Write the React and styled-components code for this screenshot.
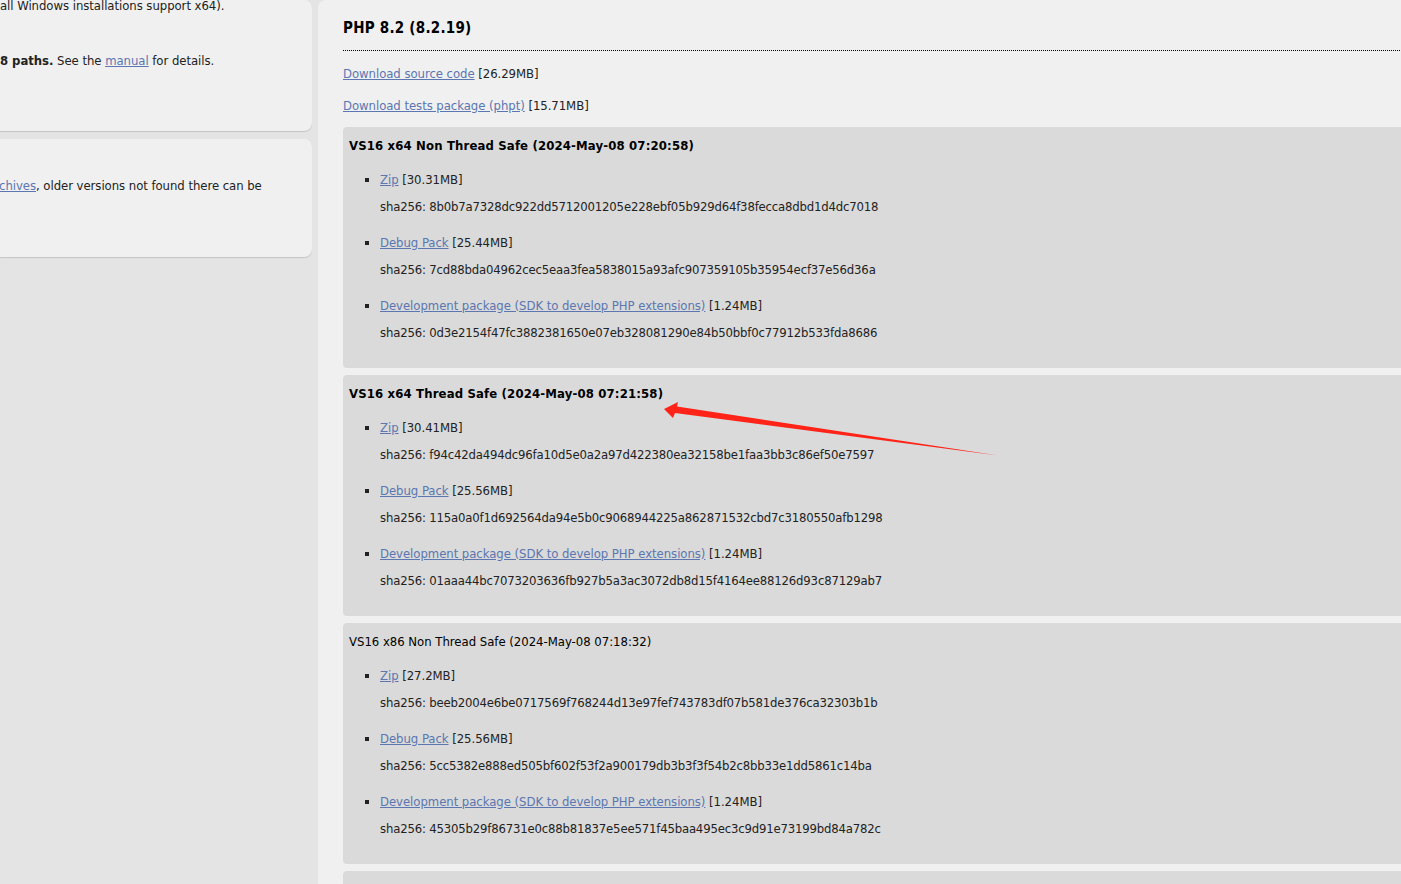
import React from 'react';
import styled, { createGlobalStyle } from 'styled-components';

const Global = createGlobalStyle`
  html, body {
    margin: 0;
    padding: 0;
    overflow: hidden;
    background: #e4e4e4;
  }
  body {
    font-family: "DejaVu Sans Condensed", "DejaVu Sans", sans-serif;
    font-stretch: condensed;
    font-size: 13px;
    line-height: 18px;
    letter-spacing: -0.05px;
    color: #222;
  }
`;

const Page = styled.div`
  position: relative;
  display: flex;
  gap: 6px;
  width: 1480px;
  height: 884px;
  background: #e4e4e4;
`;

const Sidebar = styled.aside`
  flex: 0 0 312px;
  display: flex;
  flex-direction: column;
  gap: 8px;
  overflow: hidden;
`;

const Note = styled.div`
  background: #f0f0f0;
  border-radius: 0 8px 8px 0;
  box-shadow: 0 1px 1px rgba(0, 0, 0, 0.14);
  padding: ${p => p.$top}px 0 ${p => p.$bottom}px 0;
`;

const NoteLine = styled.p`
  margin: ${p => p.$gap || 0}px 0 0 ${p => p.$shift || 0}px;
  white-space: nowrap;
`;

const Link = styled.a`
  color: #5b76b0;
  text-decoration: underline;
  cursor: pointer;
`;

const Main = styled.main`
  flex: 1;
  background: #f0f0f0;
  border-radius: 8px 0 0 0;
  padding: 18px 0 0 25px;
`;

const Heading = styled.h2`
  margin: 0;
  padding-bottom: 12px;
  border-bottom: 1px dotted #000;
  font-size: 15px;
  line-height: 20px;
  font-weight: bold;
  letter-spacing: 0.25px;
  color: #000;
`;

const Source = styled.p`
  margin: ${p => p.$gap}px 0 0;
`;

const Build = styled.section`
  margin-top: ${p => p.$gap}px;
  background: #dadada;
  border-radius: 4px 0 0 4px;
  padding: 10px 0 26px 6px;
`;

const BuildTitle = styled.div`
  font-weight: ${p => (p.$bold ? 'bold' : 'normal')};
  letter-spacing: ${p => (p.$bold ? '0.15px' : '-0.02px')};
  color: #000;
`;

const Files = styled.ul`
  margin: 16px 0 0;
  padding-left: 31px;
  list-style: square;
`;

const File = styled.li`
  & + & {
    margin-top: 18px;
  }
`;

const Sha = styled.span`
  display: block;
  margin-top: 9px;
  letter-spacing: -0.18px;
`;

const Arrow = styled.svg`
  position: absolute;
  left: 0;
  top: 0;
  pointer-events: none;
`;

const builds = [
  {
    title: 'VS16 x64 Non Thread Safe (2024-May-08 07:20:58)',
    bold: true,
    files: [
      ['Zip', '30.31MB', '8b0b7a7328dc922dd5712001205e228ebf05b929d64f38fecca8dbd1d4dc7018'],
      ['Debug Pack', '25.44MB', '7cd88bda04962cec5eaa3fea5838015a93afc907359105b35954ecf37e56d36a'],
      ['Development package (SDK to develop PHP extensions)', '1.24MB', '0d3e2154f47fc3882381650e07eb328081290e84b50bbf0c77912b533fda8686'],
    ],
  },
  {
    title: 'VS16 x64 Thread Safe (2024-May-08 07:21:58)',
    bold: true,
    files: [
      ['Zip', '30.41MB', 'f94c42da494dc96fa10d5e0a2a97d422380ea32158be1faa3bb3c86ef50e7597'],
      ['Debug Pack', '25.56MB', '115a0a0f1d692564da94e5b0c9068944225a862871532cbd7c3180550afb1298'],
      ['Development package (SDK to develop PHP extensions)', '1.24MB', '01aaa44bc7073203636fb927b5a3ac3072db8d15f4164ee88126d93c87129ab7'],
    ],
  },
  {
    title: 'VS16 x86 Non Thread Safe (2024-May-08 07:18:32)',
    bold: false,
    files: [
      ['Zip', '27.2MB', 'beeb2004e6be0717569f768244d13e97fef743783df07b581de376ca32303b1b'],
      ['Debug Pack', '25.56MB', '5cc5382e888ed505bf602f53f2a900179db3b3f3f54b2c8bb33e1dd5861c14ba'],
      ['Development package (SDK to develop PHP extensions)', '1.24MB', '45305b29f86731e0c88b81837e5ee571f45baa495ec3c9d91e73199bd84a782c'],
    ],
  },
  {
    title: 'VS16 x86 Thread Safe (2024-May-08 07:19:24)',
    bold: false,
    files: [
      ['Zip', '27.3MB', ''],
    ],
  },
];

export default function App() {
  return (
    <Page>
      <Global />
      <Sidebar>
        <Note $top={0} $bottom={61}>
          <NoteLine $gap={-3}>all Windows installations support x64).</NoteLine>
          <NoteLine $gap={37}>
            <b>8 paths.</b> See the <Link>manual</Link> for details.
          </NoteLine>
        </Note>
        <Note $top={38} $bottom={62}>
          <NoteLine $shift={-1}>
            <Link>chives</Link>, older versions not found there can be
          </NoteLine>
        </Note>
      </Sidebar>
      <Main>
        <Heading>PHP 8.2 (8.2.19)</Heading>
        <Source $gap={14}>
          <Link>Download source code</Link> [26.29MB]
        </Source>
        <Source $gap={14}>
          <Link>Download tests package (phpt)</Link> [15.71MB]
        </Source>
        {builds.map((b, i) => (
          <Build key={b.title} $gap={i === 0 ? 12 : 7}>
            <BuildTitle $bold={b.bold}>{b.title}</BuildTitle>
            <Files>
              {b.files.map(([name, size, sha]) => (
                <File key={name}>
                  <Link>{name}</Link> [{size}]
                  <Sha>sha256: {sha}</Sha>
                </File>
              ))}
            </Files>
          </Build>
        ))}
      </Main>
      <Arrow width="1401" height="884" viewBox="0 0 1401 884">
        <polygon
          points="664,409 678,402 677,406.5 998,455.5 675,413 673,418"
          fill="#ff2318"
        />
      </Arrow>
    </Page>
  );
}
